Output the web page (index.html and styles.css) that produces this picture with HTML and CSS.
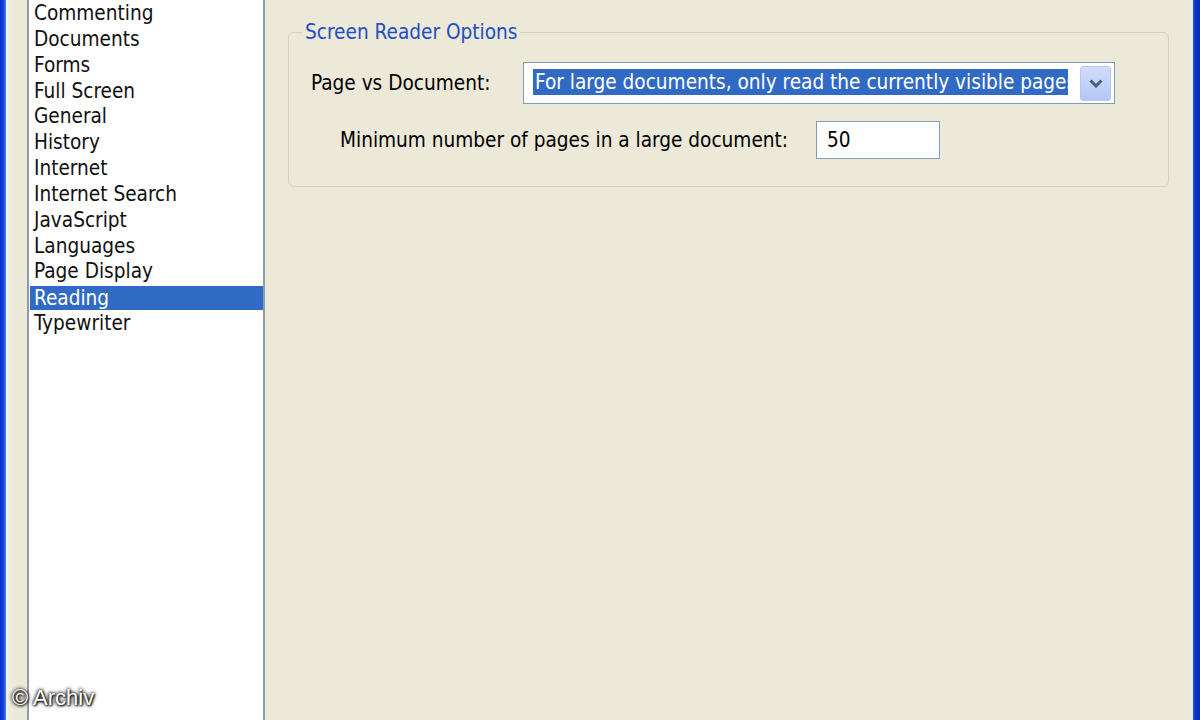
FILE: index.html
```html
<!DOCTYPE html>
<html>
<head>
<meta charset="utf-8">
<link rel="stylesheet" href="styles.css">
</head>
<body>
<div class="window">
  <div class="frame frame-left"></div>
  <div class="left-pad"></div>
  <div class="list">
    <div class="item">Commenting</div>
    <div class="item">Documents</div>
    <div class="item">Forms</div>
    <div class="item">Full Screen</div>
    <div class="item">General</div>
    <div class="item">History</div>
    <div class="item">Internet</div>
    <div class="item">Internet Search</div>
    <div class="item">JavaScript</div>
    <div class="item">Languages</div>
    <div class="item">Page Display</div>
    <div class="item selected">Reading</div>
    <div class="item">Typewriter</div>
  </div>
  <div class="panel">
    <fieldset class="group">
      <legend class="legend">Screen Reader Options</legend>
      <div class="row row-first">
        <span class="label label-page">Page vs Document:</span>
        <div class="select">
          <div class="select-value">For large documents, only read the currently visible pages</div>
          <div class="select-btn">
            <svg width="14" height="9" viewBox="0 0 14 9"><path d="M1.5 1.5 L7 7 L12.5 1.5" fill="none" stroke="#4a5d83" stroke-width="3"/></svg>
          </div>
        </div>
      </div>
      <div class="row row-second">
        <span class="label label-min">Minimum number of pages in a large document:</span>
        <div class="input">50</div>
      </div>
    </fieldset>
  </div>
  <div class="frame-right-light"></div>
  <div class="frame frame-right"></div>
  <div class="watermark">© Archiv</div>
</div>
</body>
</html>
```
FILE: styles.css
```css
html, body {
  margin: 0;
  padding: 0;
}
body {
  width: 1200px;
  height: 720px;
  overflow: hidden;
  background: #ece9d8;
  font-family: "DejaVu Sans Condensed", "DejaVu Sans", sans-serif;
  font-stretch: condensed;
  font-size: 20.6px;
  color: #000;
}
.window {
  position: relative;
  display: flex;
  width: 1200px;
  height: 720px;
}
.frame-left {
  width: 6px;
  flex: none;
  background: linear-gradient(to right, #0a2fc9 0, #0b3ee0 3px, #2a63e8 5px, #6f93e6 6px);
}
.left-pad {
  width: 21px;
  flex: none;
  background: linear-gradient(to right, #f4f3ea 0, #eeede0 3px, #ece9d8 8px, #ece9d8 100%);
}
.list {
  width: 233px;
  flex: none;
  background: #fff;
  border-left: 2px solid #8e9aad;
  border-right: 2px solid #8e9aad;
  padding-top: 1px;
  padding-left: 1px;
  box-sizing: content-box;
}
.item {
  height: 25.85px;
  line-height: 25.85px;
  padding-left: 4px;
  white-space: nowrap;
  color: #111;
}
.item.selected {
  background: #316ac5;
  color: #fff;
  height: 24px;
  line-height: 24px;
  margin-top: 0.5px;
  margin-bottom: 1.35px;
}
.panel {
  flex: 1;
  padding-left: 23px;
  padding-right: 21px;
}
.group {
  margin: 19px 0 0 0;
  border: 1px solid #d3d1c2;
  border-radius: 6px;
  padding: 0 0 27px 14px;
}
.legend {
  color: #1f4fc4;
  padding: 0 3px 0 2px;
  line-height: 26px;
  height: 26px;
}
.row {
  display: flex;
  align-items: center;
}
.row-first {
  margin-top: 17px;
}
.row-second {
  margin-top: 17px;
  padding-left: 37px;
}
.label-page {
  width: 212px;
  padding-left: 8px;
  flex: none;
}
.label-min {
  width: 476px;
  flex: none;
}
.select {
  display: flex;
  align-items: center;
  width: 578px;
  height: 40px;
  border: 1px solid #7f9db9;
  background: #fff;
  box-sizing: content-box;
  padding: 0 3px 0 9px;
}
.select-value {
  flex: 1;
  min-width: 0;
  height: 26px;
  line-height: 26px;
  background: #316ac5;
  color: #fff;
  overflow: hidden;
  white-space: nowrap;
  text-overflow: clip;
  padding-left: 2px;
  margin-right: 12px;
  margin-top: -3px;
}
.select-btn {
  width: 29px;
  height: 33px;
  flex: none;
  border: 1px solid #b7c9f0;
  border-radius: 3px;
  background: linear-gradient(to bottom, #d1dcfb, #bfd0f8 60%, #b3c6f5);
  display: flex;
  align-items: center;
  justify-content: center;
}
.input {
  width: 112px;
  height: 36px;
  line-height: 36px;
  border: 1px solid #7f9db9;
  background: #fff;
  padding-left: 10px;
}
.frame-right-light {
  width: 3px;
  flex: none;
  background: linear-gradient(to right, #f1efe6, #dfe6f3);
}
.frame-right {
  width: 7px;
  flex: none;
  background: linear-gradient(to right, #2b5ed9 0, #0b35c9 2px, #0029b8 100%);
}
.watermark {
  position: absolute;
  left: 12px;
  top: 685px;
  font-family: "Liberation Sans", Arial, sans-serif;
  font-stretch: normal;
  font-size: 22px;
  color: #fff;
  text-shadow: 0 0 3px #000, 0 0 4px #000, 1px 1px 2px #222;
}
```
